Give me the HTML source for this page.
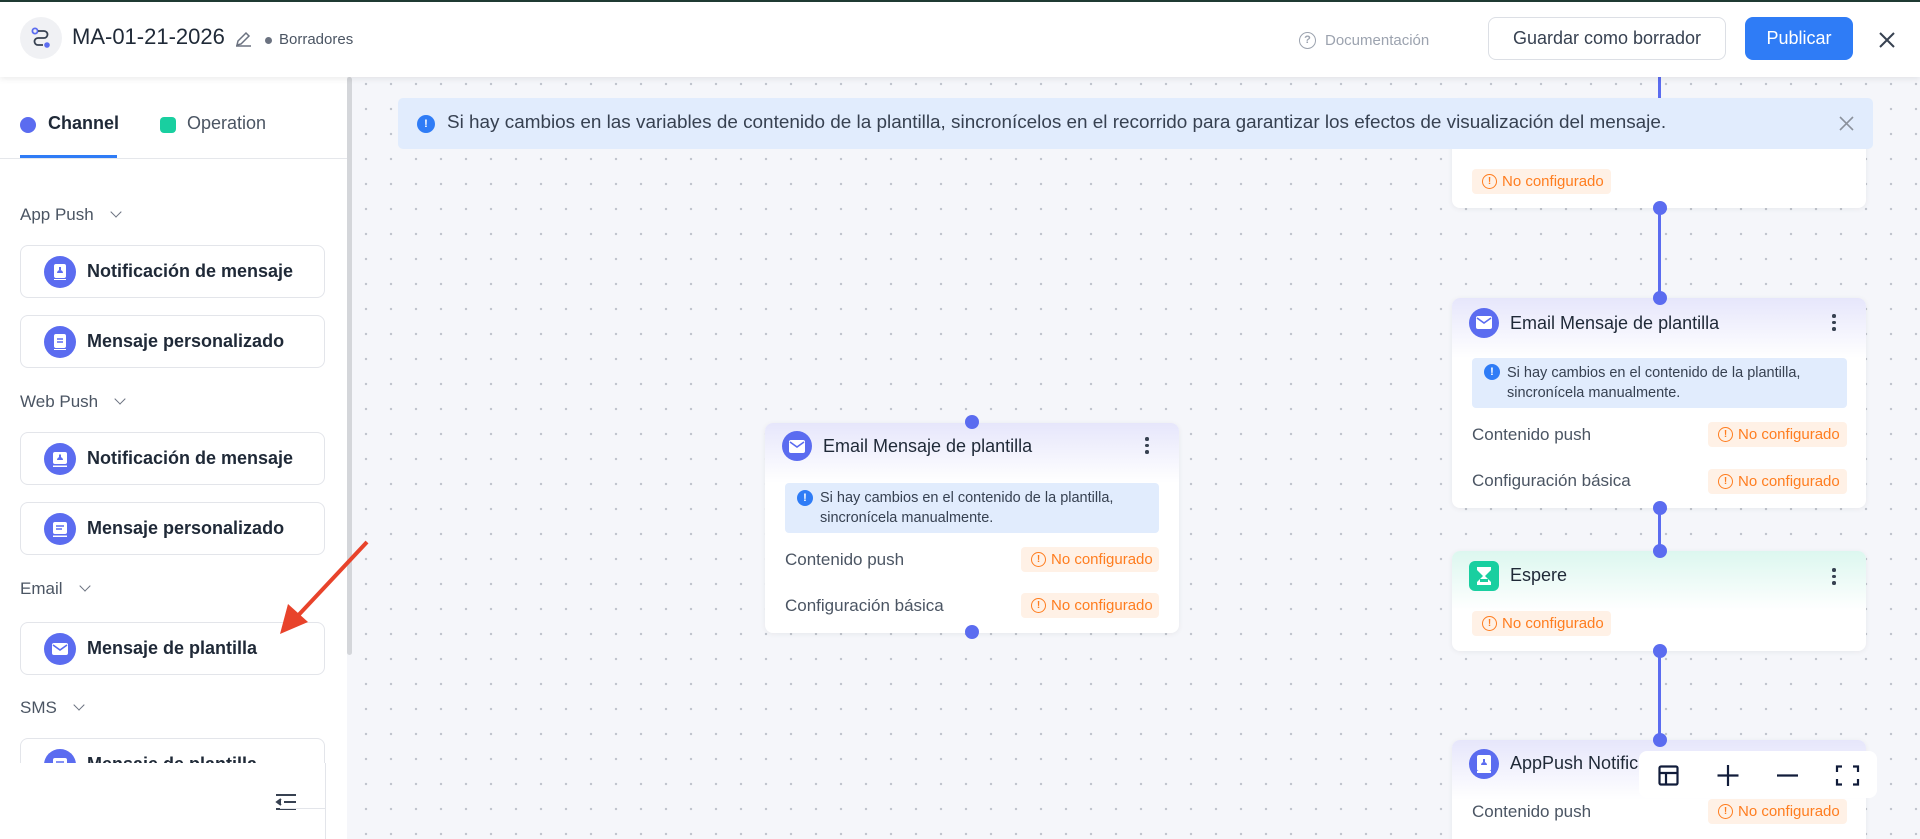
<!DOCTYPE html>
<html><head><meta charset="utf-8"><style>
*{box-sizing:border-box;margin:0;padding:0}
html,body{width:1920px;height:839px;overflow:hidden}
body{font-family:"Liberation Sans",Arial,sans-serif;position:relative;background:#f5f6fa}
.canvas{position:absolute;left:0;top:0;width:1920px;height:839px;background-color:#f5f6fa;background-image:radial-gradient(circle,#bfc3cc 1px,transparent 1.4px);background-size:25px 25px;background-position:3.5px -3.5px}
.abs{position:absolute}
.header{position:absolute;left:0;top:0;width:1920px;height:77px;background:#fff;border-top:2px solid #1f3a33;box-shadow:0 2px 6px rgba(0,0,0,.08);z-index:5}
.side{position:absolute;left:0;top:77px;width:347px;height:762px;background:#fff;z-index:3}
.card{position:absolute;left:20px;width:305px;height:53px;border:1px solid #e3e5ea;border-radius:8px;background:#fff}
.card .ic{position:absolute;left:23px;top:10px;width:32px;height:32px;border-radius:50%;background:#5b6cf0}
.card .ic svg{position:absolute;left:8px;top:8px}
.card .t{position:absolute;left:66px;top:0;line-height:51px;font-size:18px;font-weight:bold;color:#1f2937}
.lbl{position:absolute;left:20px;font-size:17px;color:#4b5563}
.chev{display:inline-block;width:8px;height:8px;border-right:1.5px solid #6b7280;border-bottom:1.5px solid #6b7280;transform:rotate(45deg);margin-left:18px;position:relative;top:-4px}
.node{position:absolute;background:#fff;border-radius:8px;box-shadow:0 1px 6px rgba(0,0,0,.06)}
.nh{position:absolute;left:0;top:0;right:0;height:60px;border-radius:8px 8px 0 0;background:linear-gradient(#e6e6fb,#fff)}
.tag{position:absolute;height:25px;background:#fff1e6;color:#ff7d1f;font-size:15px;line-height:25px;border-radius:4px;padding-left:30px}
.tag:before{content:"!";position:absolute;left:10px;top:5px;width:13px;height:13px;border:1.5px solid #ff7d1f;border-radius:50%;font-size:10px;line-height:13px;text-align:center;font-weight:bold}
.row{position:absolute;font-size:17px;color:#4b5563}
.info{position:absolute;background:#e1ecfd;border-radius:4px;font-size:14.5px;color:#374151;line-height:20px}
.ii{position:absolute;width:16px;height:16px;border-radius:50%;background:#2f7cf6;color:#fff;font-size:11px;font-weight:bold;text-align:center;line-height:16px}
.dot{position:absolute;width:14px;height:14px;border-radius:50%;background:#5b6cf0}
.vl{position:absolute;width:3px;background:#5b6cf0;left:1658px}
.more{position:absolute;width:4px}
.more i{display:block;width:3.5px;height:3.5px;background:#374151;border-radius:50%;margin-bottom:3px}
.title{position:absolute;font-size:18px;color:#1f2937}
.circ{position:absolute;width:30px;height:30px;border-radius:50%;background:#5b6cf0}
</style></head><body>
<div class="canvas"></div>

<div class="header">
 <div class="abs" style="left:20px;top:15px;width:42px;height:42px;border-radius:50%;background:#f0f1f4"></div>
 <svg class="abs" style="left:30px;top:25px" width="22" height="22" viewBox="0 0 22 22" fill="none" stroke="#374151" stroke-width="1.8"><circle cx="5" cy="4" r="2.6" stroke="#5b6cf0"/><path d="M8 4h6a3.5 3.5 0 0 1 0 7H8a3.5 3.5 0 0 0 0 7h5"/><circle cx="17" cy="18" r="2.8" fill="#5b6cf0" stroke="none"/></svg>
 <div class="abs" style="left:72px;top:22px;font-size:22px;color:#1f2937">MA-01-21-2026</div>
 <svg class="abs" style="left:234px;top:28px" width="19" height="18" viewBox="0 0 19 18" fill="none" stroke="#6b7280" stroke-width="1.5"><path d="M2 16h15M3 15l1-4 8-8 3 3-8 8z"/></svg>
 <div class="abs" style="left:265px;top:35px;width:7px;height:7px;border-radius:50%;background:#6b7280"></div>
 <div class="abs" style="left:279px;top:29px;font-size:15px;color:#4b5563">Borradores</div>
 <div class="abs" style="left:1299px;top:30px;width:17px;height:17px;border:1.5px solid #9ca3af;border-radius:50%;font-size:11px;color:#9ca3af;text-align:center;line-height:14px;font-weight:bold">?</div>
 <div class="abs" style="left:1325px;top:30px;font-size:15px;color:#9ca3af">Documentación</div>
 <div class="abs" style="left:1488px;top:15px;width:238px;height:43px;border:1px solid #dcdfe5;border-radius:8px;font-size:18px;color:#374151;text-align:center;line-height:41px">Guardar como borrador</div>
 <div class="abs" style="left:1745px;top:15px;width:108px;height:43px;background:#2f7cf6;border-radius:8px;font-size:18px;color:#fff;text-align:center;line-height:43px">Publicar</div>
 <svg class="abs" style="left:1878px;top:29px" width="18" height="18" viewBox="0 0 18 18" stroke="#374151" stroke-width="2"><path d="M2 2l14 14M16 2L2 16"/></svg>
</div>

<div class="side">
 <div class="abs" style="left:20px;top:40px;width:16px;height:16px;border-radius:50%;background:#5b6cf0"></div>
 <div class="abs" style="left:48px;top:36px;font-size:18px;font-weight:bold;color:#1f2937">Channel</div>
 <div class="abs" style="left:160px;top:40px;width:16px;height:16px;border-radius:4px;background:#19cfa0"></div>
 <div class="abs" style="left:187px;top:36px;font-size:18px;color:#4b5563">Operation</div>
 <div class="abs" style="left:20px;top:78px;width:97px;height:3px;background:#2f7cf6"></div>
 <div class="abs" style="left:0;top:81px;width:347px;height:1px;background:#e5e7eb"></div>

 <div class="lbl" style="top:128px">App Push<span class="chev"></span></div>
 <div class="card" style="top:168px"><div class="ic"><svg width="16" height="16" viewBox="0 0 16 16"><rect x="2" y="0" width="12" height="14" rx="2" fill="#fff"/><path d="M5 9a3 3 0 0 1 6 0zM7 3h2v3H7z" fill="#5b6cf0"/><rect x="2" y="15" width="12" height="1.5" fill="#fff"/></svg></div><div class="t">Notificación de mensaje</div></div>
 <div class="card" style="top:238px"><div class="ic"><svg width="16" height="16" viewBox="0 0 16 16"><rect x="2" y="0" width="12" height="14" rx="2" fill="#fff"/><path d="M5 5h6M5 8h6" stroke="#5b6cf0" stroke-width="1.5"/><rect x="2" y="15" width="12" height="1.5" fill="#fff"/></svg></div><div class="t">Mensaje personalizado</div></div>
 <div class="lbl" style="top:315px">Web Push<span class="chev"></span></div>
 <div class="card" style="top:355px"><div class="ic"><svg width="16" height="16" viewBox="0 0 16 16"><rect x="1" y="1" width="14" height="12" rx="2" fill="#fff"/><path d="M5 9a3 3 0 0 1 6 0zM7 3.5h2v3H7z" fill="#5b6cf0"/><rect x="1" y="14.5" width="14" height="1.5" fill="#fff"/></svg></div><div class="t">Notificación de mensaje</div></div>
 <div class="card" style="top:425px"><div class="ic"><svg width="16" height="16" viewBox="0 0 16 16"><rect x="1" y="1" width="14" height="12" rx="2" fill="#fff"/><path d="M4 5h8M4 8h6" stroke="#5b6cf0" stroke-width="1.5"/><rect x="1" y="14.5" width="14" height="1.5" fill="#fff"/></svg></div><div class="t">Mensaje personalizado</div></div>
 <div class="lbl" style="top:502px">Email<span class="chev"></span></div>
 <div class="card" style="top:545px"><div class="ic"><svg width="16" height="16" viewBox="0 0 16 16"><rect x="0" y="2" width="16" height="12" rx="2" fill="#fff"/><path d="M1 4l7 5 7-5" stroke="#5b6cf0" stroke-width="1.6" fill="none"/></svg></div><div class="t">Mensaje de plantilla</div></div>
 <div class="lbl" style="top:621px">SMS<span class="chev"></span></div>
 <div style="position:absolute;left:0;top:661px;width:347px;height:25px;overflow:hidden"><div class="card" style="top:0;border-bottom:none"><div class="ic"><svg width="16" height="16" viewBox="0 0 16 16"><rect x="1" y="1" width="14" height="12" rx="2" fill="#fff"/><path d="M4 5h8" stroke="#5b6cf0" stroke-width="1.5"/></svg></div><div class="t">Mensaje de plantilla</div></div></div>
 <div class="abs" style="left:325px;top:686px;width:1px;height:45px;background:#e3e5ea"></div>
 <svg class="abs" style="left:275px;top:716px" width="22" height="18" viewBox="0 0 22 18" stroke="#374151" stroke-width="2" fill="none"><path d="M1 2h20M9 9h12M1 16h20M6 6l-4 3 4 3" fill="#374151"/></svg>
 <div class="abs" style="left:325px;top:731px;width:1px;height:40px;background:#e3e5ea"></div>
 <div class="abs" style="left:280px;top:731px;width:46px;height:1px;background:#e3e5ea"></div>
 <div class="abs" style="left:347px;top:0;width:5px;height:578px;background:#d4d6da;border-radius:3px"></div>
</div>
<svg class="abs" style="left:270px;top:530px;z-index:4" width="110" height="110" viewBox="0 0 110 110"><path d="M97 12L22 92" stroke="#e8432b" stroke-width="4"/><path d="M10 104L18 74L38 92z" fill="#e8432b"/></svg>

<div class="vl" style="top:77px;height:21px"></div>
<div class="vl" style="top:208px;height:90px"></div>
<div class="vl" style="top:508px;height:43px"></div>
<div class="vl" style="top:651px;height:90px"></div>

<div class="node" style="left:1452px;top:100px;width:414px;height:108px"></div>
<div class="tag" style="left:1472px;top:169px;width:139px">No configurado</div>
<div class="dot" style="left:1653px;top:201px"></div>

<div class="node" style="left:1452px;top:298px;width:414px;height:210px"><div class="nh"></div></div>
<div class="dot" style="left:1653px;top:291px"></div>
<div class="circ" style="left:1469px;top:308px"></div>
<svg class="abs" style="left:1476px;top:316px" width="16" height="13" viewBox="0 0 16 13"><rect width="16" height="13" rx="2" fill="#fff"/><path d="M1 2l7 5 7-5" stroke="#5b6cf0" stroke-width="1.6" fill="none"/></svg>
<div class="title" style="left:1510px;top:313px">Email Mensaje de plantilla</div>
<div class="more" style="left:1832px;top:314px"><i></i><i></i><i></i></div>
<div class="info" style="left:1472px;top:358px;width:375px;height:50px;padding:5px 0 0 35px">Si hay cambios en el contenido de la plantilla, sincronícela manualmente.</div>
<div class="ii" style="left:1484px;top:364px">!</div>
<div class="row" style="left:1472px;top:425px">Contenido push</div>
<div class="tag" style="left:1708px;top:422px;width:139px">No configurado</div>
<div class="row" style="left:1472px;top:471px">Configuración básica</div>
<div class="tag" style="left:1708px;top:469px;width:139px">No configurado</div>
<div class="dot" style="left:1653px;top:501px"></div>

<div class="node" style="left:1452px;top:551px;width:414px;height:100px"><div class="nh" style="background:linear-gradient(#dcf7ef,#fff)"></div></div>
<div class="dot" style="left:1653px;top:544px"></div>
<div class="abs" style="left:1469px;top:561px;width:30px;height:30px;border-radius:6px;background:#19cfa0"></div>
<svg class="abs" style="left:1476px;top:567px" width="16" height="18" viewBox="0 0 16 18" fill="#fff"><path d="M1 0h14v3L9 9l6 6v3H1v-3l6-6L1 3z"/><rect x="4" y="12" width="8" height="3" fill="#19cfa0"/></svg>
<div class="title" style="left:1510px;top:565px">Espere</div>
<div class="more" style="left:1832px;top:568px"><i></i><i></i><i></i></div>
<div class="tag" style="left:1472px;top:611px;width:139px">No configurado</div>
<div class="dot" style="left:1653px;top:644px"></div>

<div class="node" style="left:1452px;top:740px;width:414px;height:110px"><div class="nh"></div></div>
<div class="dot" style="left:1653px;top:733px"></div>
<div class="circ" style="left:1469px;top:749px"></div>
<svg class="abs" style="left:1477px;top:755px" width="14" height="18" viewBox="0 0 14 18"><rect width="14" height="16" rx="2" fill="#fff"/><path d="M4 10a3 3 0 0 1 6 0zM6 4h2v3H6z" fill="#5b6cf0"/><rect y="16" width="14" height="2" fill="#fff"/></svg>
<div class="title" style="left:1510px;top:753px">AppPush Notificación de mensaje</div>
<div class="row" style="left:1472px;top:802px">Contenido push</div>
<div class="tag" style="left:1708px;top:799px;width:139px">No configurado</div>
<div class="abs" style="left:1639px;top:751px;width:238px;height:47px;background:#fff;border-radius:8px;z-index:2"></div>
<svg class="abs" style="left:1658px;top:765px;z-index:3" width="220" height="22" viewBox="0 0 220 22" fill="none" stroke="#111c3a" stroke-width="2.2"><rect x="1.5" y="1.5" width="18" height="18" rx="1.5"/><path d="M1.5 8h18M8 8v11.5"/><path d="M70 0v21M59.5 10.5h21"/><path d="M119 10.5h21"/><path d="M179 7V1.5h5M195 1.5h5V7M200 14v5.5h-5M184 19.5h-5V14"/></svg>

<div class="node" style="left:765px;top:423px;width:414px;height:210px"><div class="nh"></div></div>
<div class="dot" style="left:965px;top:415px"></div>
<div class="circ" style="left:782px;top:431px"></div>
<svg class="abs" style="left:789px;top:440px" width="16" height="13" viewBox="0 0 16 13"><rect width="16" height="13" rx="2" fill="#fff"/><path d="M1 2l7 5 7-5" stroke="#5b6cf0" stroke-width="1.6" fill="none"/></svg>
<div class="title" style="left:823px;top:436px">Email Mensaje de plantilla</div>
<div class="more" style="left:1145px;top:437px"><i></i><i></i><i></i></div>
<div class="info" style="left:785px;top:483px;width:374px;height:50px;padding:5px 0 0 35px">Si hay cambios en el contenido de la plantilla, sincronícela manualmente.</div>
<div class="ii" style="left:797px;top:490px">!</div>
<div class="row" style="left:785px;top:550px">Contenido push</div>
<div class="tag" style="left:1021px;top:547px;width:138px">No configurado</div>
<div class="row" style="left:785px;top:596px">Configuración básica</div>
<div class="tag" style="left:1021px;top:593px;width:138px">No configurado</div>
<div class="dot" style="left:965px;top:625px"></div>

<div class="abs" style="left:398px;top:98px;width:1475px;height:51px;background:#e1ecfd;border-radius:5px;z-index:2"></div>
<div class="ii" style="left:417px;top:115px;width:18px;height:18px;line-height:18px;z-index:3">!</div>
<div class="abs" style="left:447px;top:112px;font-size:18.9px;color:#374151;z-index:3;white-space:nowrap">Si hay cambios en las variables de contenido de la plantilla, sincronícelos en el recorrido para garantizar los efectos de visualización del mensaje.</div>
<svg class="abs" style="left:1839px;top:116px;z-index:3" width="15" height="15" viewBox="0 0 15 15" stroke="#8b919c" stroke-width="1.6"><path d="M1 1l13 13M14 1L1 14"/></svg>
</body></html>
